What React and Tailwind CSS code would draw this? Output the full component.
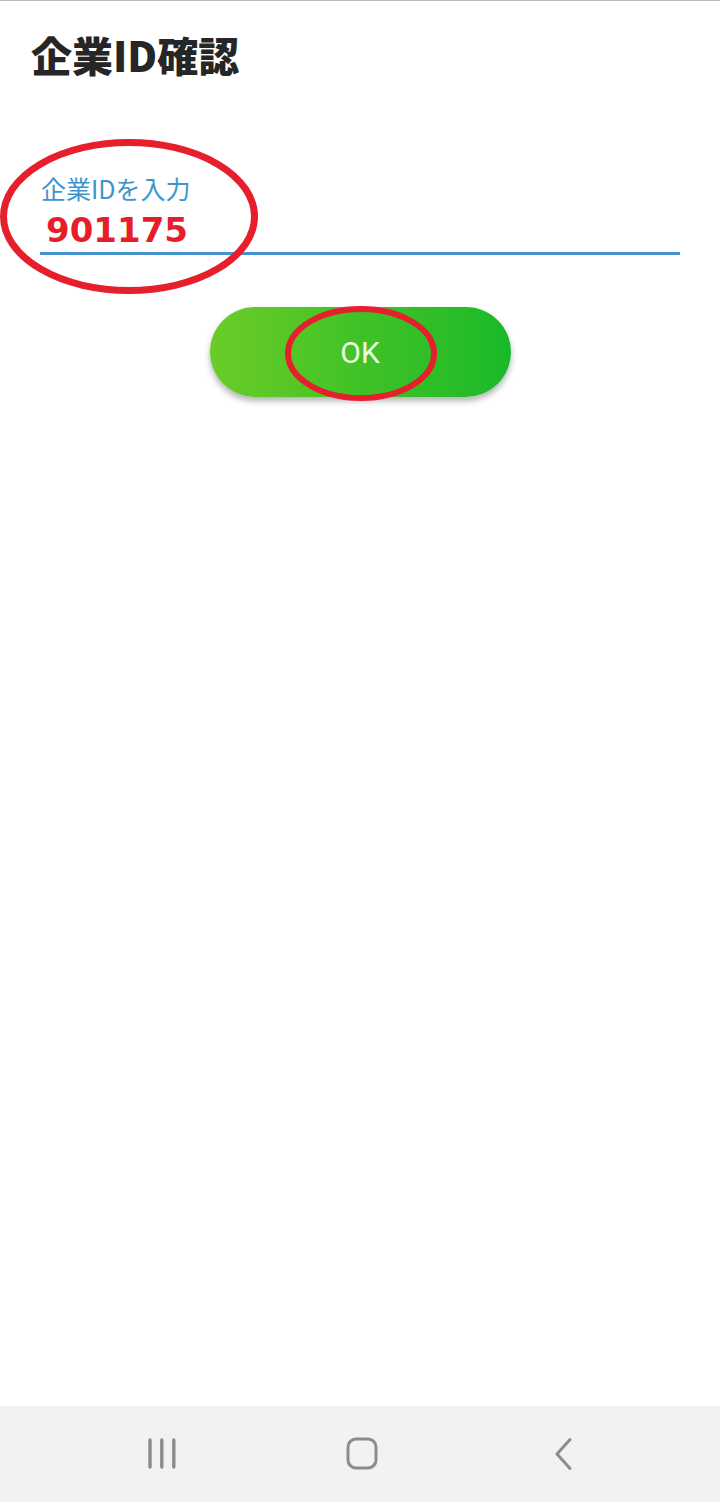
const NavBar = () => (
  <div className="h-[96px] bg-[#f2f2f2] flex items-center pl-[141px] gap-[161px]">
    {/* recent apps */}
    <div className="w-[40px] h-[40px] flex items-center justify-center">
      <svg width="32" height="34" viewBox="0 0 32 34" fill="none" stroke="#8c8c8c" strokeWidth="3.4" strokeLinecap="round">
        <path d="M5 3v27" />
        <path d="M16.8 3v27" />
        <path d="M28.8 3v27" />
      </svg>
    </div>
    {/* home */}
    <div className="w-[40px] h-[40px] flex items-center justify-center">
      <svg width="32" height="34" viewBox="0 0 32 34" fill="none" stroke="#8c8c8c" strokeWidth="3">
        <rect x="2" y="2" width="28" height="29" rx="8" />
      </svg>
    </div>
    {/* back */}
    <div className="w-[40px] h-[40px] flex items-center justify-center">
      <svg width="32" height="34" viewBox="0 0 32 34" fill="none" stroke="#8c8c8c" strokeWidth="3" strokeLinecap="round" strokeLinejoin="round">
        <path d="M23 2.5L10 17l13 14.5" />
      </svg>
    </div>
  </div>
);

export default function App() {
  return (
    <div className="relative w-[720px] h-[1502px] bg-white flex flex-col border-t border-[#bdbdbd] overflow-hidden">
      <div className="flex-1">
        <h1
          className="pt-[33px] pl-[31px] text-[41px] leading-none font-black text-[#262626]"
          style={{ fontFamily: '"Noto Sans CJK JP", "Noto Sans", sans-serif' }}
        >
          企業ID確認
        </h1>

        <div className="mt-[101px] mx-[40px]">
          <div
            className="pl-[1px] text-[25px] leading-none text-[#3d95cf]"
            style={{ fontFamily: '"Noto Sans CJK JP", "Noto Sans", sans-serif' }}
          >
            企業IDを入力
          </div>
          <div
            className="mt-[12px] ml-[6px] text-[34px] leading-none font-bold text-[#e61e2a]"
            style={{ fontFamily: '"DejaVu Sans", sans-serif' }}
          >
            901175
          </div>
          <div className="mt-[5px] h-[3px] bg-[#4693cf]" />
        </div>

        <button
          className="mt-[52px] mx-auto flex items-center justify-center w-[301px] h-[90px] rounded-full bg-gradient-to-r from-[#6acc28] via-[#3fc226] to-[#17b929] shadow-[0_4px_6px_rgba(0,0,0,0.3)] text-[30px] text-[#e9fde1]"
          style={{ fontFamily: 'Roboto, sans-serif' }}
        >
          OK
        </button>
      </div>

      <NavBar />

      {/* red annotation circles */}
      <svg className="absolute inset-0 pointer-events-none" width="720" height="1502" viewBox="0 0 720 1502" fill="none" stroke="#e51f2b">
        <ellipse cx="129" cy="215.5" rx="125.5" ry="74" strokeWidth="7" />
        <ellipse cx="361" cy="352.5" rx="73" ry="44.5" strokeWidth="6" />
      </svg>
    </div>
  );
}
